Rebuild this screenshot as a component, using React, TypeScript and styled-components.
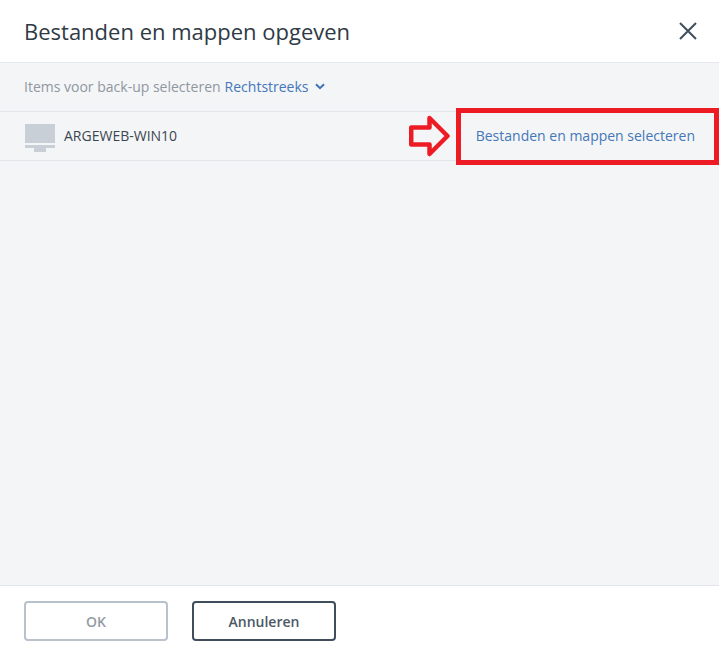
import React from 'react'
import styled, { createGlobalStyle } from 'styled-components'

const GlobalStyle = createGlobalStyle`
  html, body {
    margin: 0;
    padding: 0;
    background: #fff;
    font-family: "Open Sans", "Liberation Sans", sans-serif;
  }
`

const App = () => (
  <>
    <GlobalStyle />
    <Dialog>
      <Header>
        <Title>Bestanden en mappen opgeven</Title>
        <CloseButton aria-label='Sluiten'>
          <svg width='18' height='18' viewBox='0 0 18 18'>
            <path d='M1 1l16 16M17 1L1 17' stroke='#3f4d5c' strokeWidth='2' fill='none' />
          </svg>
        </CloseButton>
      </Header>
      <Body>
        <FilterBar>
          <FilterLabel>Items voor back-up selecteren</FilterLabel>
          <FilterLink>
            Rechtstreeks
            <svg width='10' height='7' viewBox='0 0 10 7'>
              <path d='M1 1.2l4 4 4-4' stroke='#3f74b5' strokeWidth='2' fill='none' />
            </svg>
          </FilterLink>
        </FilterBar>
        <MachineRow>
          <MachineName>
            <svg width='30' height='28' viewBox='0 0 30 28'>
              <path d='M0 0h30v19H0zM0 21h30v3H0zM9 24h12v4H9z' fill='#c8cfd6' />
            </svg>
            ARGEWEB-WIN10
          </MachineName>
          <SelectLink>Bestanden en mappen selecteren</SelectLink>
          <Arrow width='42' height='43' viewBox='0 0 42 43'>
            <path
              d='M2.200 12.500h18.300V3l18 18-18 18v-9.500H2.200z'
              fill='#f4f5f7'
              stroke='#ed1c24'
              strokeWidth='4.500'
              strokeLinejoin='round'
            />
          </Arrow>
          <Highlight />
        </MachineRow>
      </Body>
      <Footer>
        <Button disabled>OK</Button>
        <Button>Annuleren</Button>
      </Footer>
    </Dialog>
  </>
)

const Dialog = styled.div`
  width: 719px;
  height: 656px;
  display: flex;
  flex-direction: column;
  overflow: hidden;
`

const Header = styled.div`
  height: 62px;
  flex: none;
  display: flex;
  align-items: center;
  justify-content: space-between;
  padding: 0 22px 0 24px;
  border-bottom: 1px solid #e4e7eb;
`

const Title = styled.div`
  font-size: 22px;
  color: #2f3a45;
`

const CloseButton = styled.button`
  width: 18px;
  height: 18px;
  padding: 0;
  border: 0;
  background: none;
  display: flex;
`

const Body = styled.div`
  flex: 1;
  background: #f4f5f7;
`

const FilterBar = styled.div`
  box-sizing: border-box;
  height: 49px;
  display: flex;
  align-items: center;
  gap: 4px;
  padding: 0 24px 2px 24px;
  font-size: 14px;
  border-bottom: 1px solid #e2e5e9;
`

const FilterLabel = styled.span`
  color: #8f979f;
`

const FilterLink = styled.span`
  display: flex;
  align-items: center;
  gap: 6px;
  color: #4477b7;
`

const MachineRow = styled.div`
  position: relative;
  box-sizing: border-box;
  height: 49px;
  display: flex;
  align-items: center;
  justify-content: space-between;
  padding: 0 24px 2px 25px;
  font-size: 14px;
  border-bottom: 1px solid #e2e5e9;
`

const MachineName = styled.div`
  display: flex;
  align-items: center;
  gap: 9px;
  color: #3c4650;

  svg {
    margin-top: 5px;
  }
`

const SelectLink = styled.a`
  color: #4477b7;
`

const Arrow = styled.svg`
  position: absolute;
  left: 409px;
  top: 3px;
`

const Highlight = styled.div`
  position: absolute;
  left: 456px;
  top: -4px;
  width: 263px;
  height: 57px;
  box-sizing: border-box;
  border: 5px solid #ed1c24;
`

const Footer = styled.div`
  height: 71px;
  flex: none;
  box-sizing: border-box;
  display: flex;
  align-items: center;
  gap: 24px;
  padding: 0 24px;
  border-top: 1px solid #e2e5e9;
`

const Button = styled.button`
  width: 144px;
  height: 40px;
  box-sizing: border-box;
  background: #fff;
  border: 2px solid #3f4d5c;
  border-radius: 4px;
  color: #4c5865;
  font-family: inherit;
  font-size: 14px;
  font-weight: 600;

  &:disabled {
    border-color: #b8c2cc;
    color: #949ba3;
  }
`

export default App
